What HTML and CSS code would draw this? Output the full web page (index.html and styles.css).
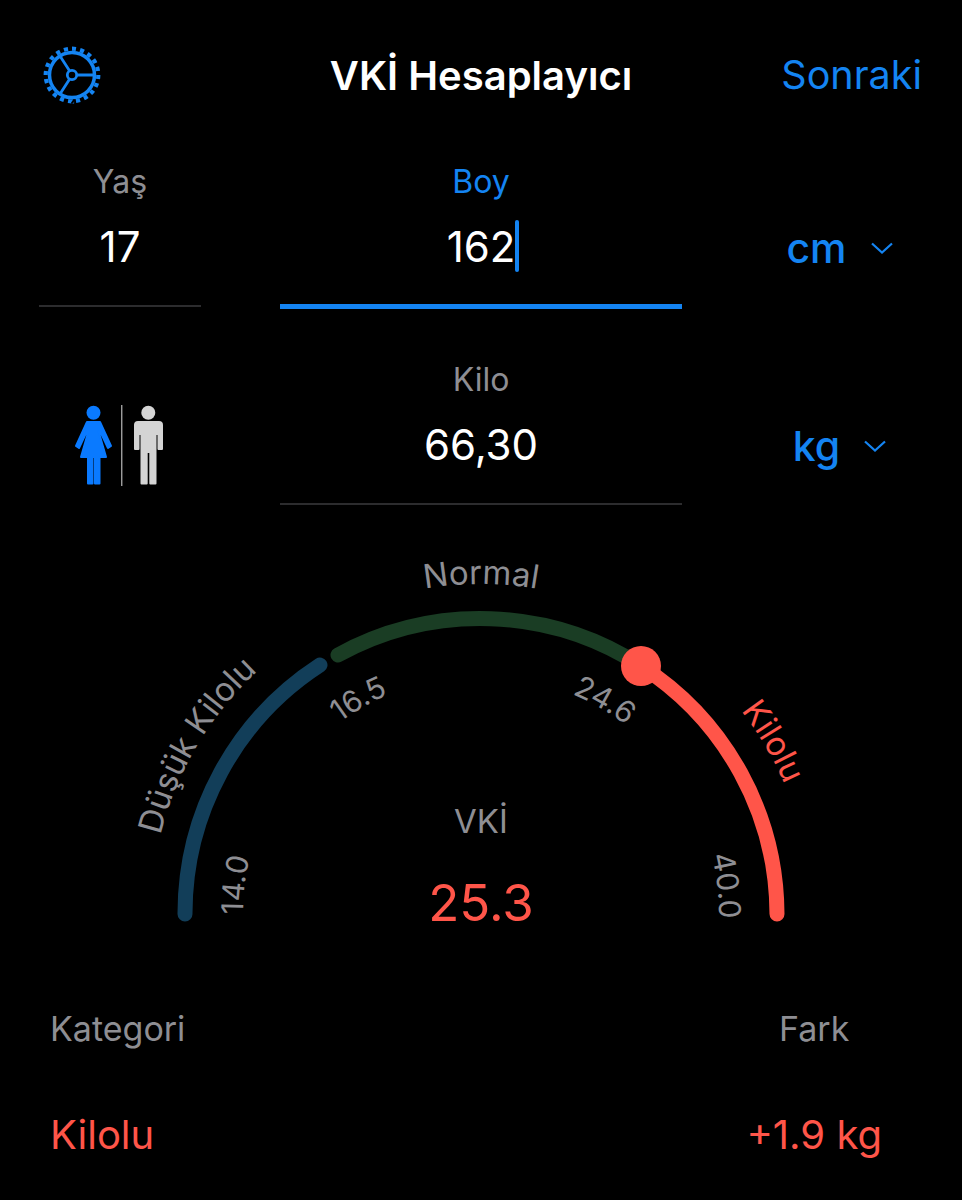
FILE: index.html
```html
<!DOCTYPE html>
<html lang="tr">
<head>
  <meta charset="UTF-8">
  <title>VKİ Hesaplayıcı</title>
  <link rel="stylesheet" href="styles.css">
</head>
<body>
  <div class="header">
    <svg class="gear" viewBox="0 0 60 60" fill="none" stroke="#1484f2">
      <circle cx="29" cy="30" r="26.3" stroke-width="4.2" pathLength="40" stroke-dasharray="1 1"/>
      <circle cx="29" cy="30" r="22.500" stroke-width="3.500"/>
      <circle cx="29" cy="30" r="4.700" stroke-width="2.800"/>
      <path d="M34 30H52M26.500 25.800 17 11M26.500 34.200 17 49" stroke-width="2.800"/>
    </svg>
    <h1 class="title">VKİ Hesaplayıcı</h1>
    <a class="next">Sonraki</a>
  </div>

  <div class="form">
    <div class="field">
      <span class="label">Yaş</span>
      <span class="value">17</span>
    </div>
    <div class="field active">
      <span class="label">Boy</span>
      <span class="value">162<i class="caret"></i></span>
    </div>
    <div class="unit">
      <span>cm</span>
      <svg class="chevron" viewBox="0 0 24 12"><path d="M2 1.5 12 10.5 22 1.5"/></svg>
    </div>

    <svg class="gender" viewBox="0 0 140 110">
      <circle class="female" cx="43.500" cy="22.700" r="7"/>
      <path class="female round" d="M37 32H50L61 56 58 58 50 41H48.500L56 67H31L38.500 41H37L29 58 26 56Z"/>
      <path class="female round" d="M38 67H42.500V93.500H38ZM45 67H49.500V93.500H45Z"/>
      <rect class="divider" x="71.300" y="15" width="1" height="81"/>
      <circle class="male" cx="98.300" cy="22.700" r="7"/>
      <path class="male round" d="M88 32H109Q112 32 112 35V59H108.500V44H105.500V93.500H100.300V62H96.700V93.500H91.500V44H88.500V59H85V35Q85 32 88 32Z"/>
    </svg>
    <div class="field">
      <span class="label">Kilo</span>
      <span class="value">66,30</span>
    </div>
    <div class="unit">
      <span>kg</span>
      <svg class="chevron" viewBox="0 0 24 12"><path d="M2 1.5 12 10.5 22 1.5"/></svg>
    </div>
  </div>

  <svg class="gauge" viewBox="0 506 962 450">
    <defs>
      <path id="outer" d="M151 914A330 330 0 0 1 811 914"/>
      <path id="inner" d="M243 914A238 238 0 0 1 719 914"/>
    </defs>
    <path class="arc" stroke="#123e59" d="M185 914A296 296 0 0 1 320 665"/>
    <path class="arc" stroke="#1a3d24" d="M338 655A296 296 0 0 1 641 666"/>
    <path class="arc" stroke="#ff5549" d="M641 666A296 296 0 0 1 777 914"/>
    <circle cx="641" cy="666" r="20" fill="#ff5549"/>

    <text class="arc-label"><textPath href="#outer" startOffset="17%" text-anchor="middle">Düşük Kilolu</textPath></text>
    <text class="arc-label"><textPath href="#outer" startOffset="50%" text-anchor="middle">Normal</textPath></text>
    <text class="arc-label red"><textPath href="#outer" startOffset="83%" text-anchor="middle">Kilolu</textPath></text>

    <text class="tick"><textPath href="#inner" startOffset="3.8%" text-anchor="middle">14.0</textPath></text>
    <text class="tick"><textPath href="#inner" startOffset="33.5%" text-anchor="middle">16.5</textPath></text>
    <text class="tick"><textPath href="#inner" startOffset="66.7%" text-anchor="middle">24.6</textPath></text>
    <text class="tick"><textPath href="#inner" startOffset="96.3%" text-anchor="middle">40.0</textPath></text>

    <text class="bmi-label" x="481" y="833" text-anchor="middle">VKİ</text>
    <text class="bmi-value" x="481" y="921" text-anchor="middle">25.3</text>
  </svg>

  <div class="results">
    <div class="result">
      <span class="result-label">Kategori</span>
      <span class="result-value">Kilolu</span>
    </div>
    <div class="result right">
      <span class="result-label">Fark</span>
      <span class="result-value">+1.9 kg</span>
    </div>
  </div>
</body>
</html>
```

FILE: styles.css
```css
body {
  margin: 0;
  width: 962px;
  height: 1200px;
  overflow: hidden;
  background-color: #000;
  color: #fff;
  font-family: Inter, 'Liberation Sans', sans-serif;
}

.header {
  display: flex;
  align-items: center;
  justify-content: space-between;
  height: 150px;
  padding: 0 40px 0 43px;
  position: relative;
}

.gear {
  width: 60px;
  height: 60px;
}

.title {
  position: absolute;
  left: 0;
  right: 0;
  margin: 0;
  text-align: center;
  font-size: 40px;
  font-weight: 600;
}

.next {
  font-size: 39.5px;
  color: #1484f2;
}

.form {
  display: grid;
  grid-template-columns: 162px 402px 162px;
  column-gap: 79px;
  padding: 0 39px;
  align-items: start;
}

.field {
  display: flex;
  flex-direction: column;
  align-items: center;
  height: 157px;
  padding-top: 12px;
  border-bottom: 2px solid #2c2c2e;
  box-sizing: border-box;
  margin-bottom: 41px;
}

.field.active {
  height: 159px;
  margin-bottom: 39px;
  border-bottom: 5px solid #1484f2;
}

.label {
  font-size: 32px;
  line-height: 40px;
  color: #8e8e93;
}

.active .label {
  color: #1484f2;
}

.value {
  font-size: 42px;
  line-height: 50px;
  margin-top: 20px;
  position: relative;
}

.caret {
  position: absolute;
  left: 100%;
  top: -2px;
  width: 4px;
  height: 52px;
  border-radius: 2px;
  background-color: #1484f2;
}

.unit {
  display: flex;
  align-items: center;
  justify-content: center;
  gap: 23px;
  height: 158px;
  padding: 38px 4px 0 0;
  box-sizing: border-box;
  font-size: 41px;
  font-weight: 500;
  color: #1484f2;
}

.chevron {
  width: 24px;
  height: 12px;
  fill: none;
  stroke: #1484f2;
  stroke-width: 2.2;
}

.gender {
  width: 140px;
  height: 110px;
  margin: 42px 0 0 11px;
}

.female {
  fill: #0a7aff;
}

.male {
  fill: #d4d4d4;
}

.round {
  stroke-width: 2;
  stroke-linejoin: round;
}

.female.round {
  stroke: #0a7aff;
}

.male.round {
  stroke: #d4d4d4;
}

.divider {
  fill: #ddd;
}

.gauge {
  display: block;
  width: 962px;
  height: 450px;
  margin-top: -40px;
}

.arc {
  fill: none;
  stroke-width: 15;
  stroke-linecap: round;
}

.arc-label {
  font-size: 33px;
  fill: #8e8e93;
}

.arc-label.red {
  fill: #ff5549;
}

.tick {
  font-size: 30px;
  fill: #8e8e93;
}

.bmi-label {
  font-size: 33px;
  fill: #8e8e93;
}

.bmi-value {
  font-size: 51px;
  font-weight: 400;
  fill: #ff5549;
}

.results {
  display: flex;
  justify-content: space-between;
  padding: 52px 80px 0 50px;
}

.result {
  display: flex;
  flex-direction: column;
  gap: 61px;
}

.result.right {
  align-items: center;
}

.result-label {
  font-size: 34px;
  line-height: 42px;
  color: #8e8e93;
}

.result-value {
  font-size: 40px;
  line-height: 48px;
  color: #ff5549;
}
```
